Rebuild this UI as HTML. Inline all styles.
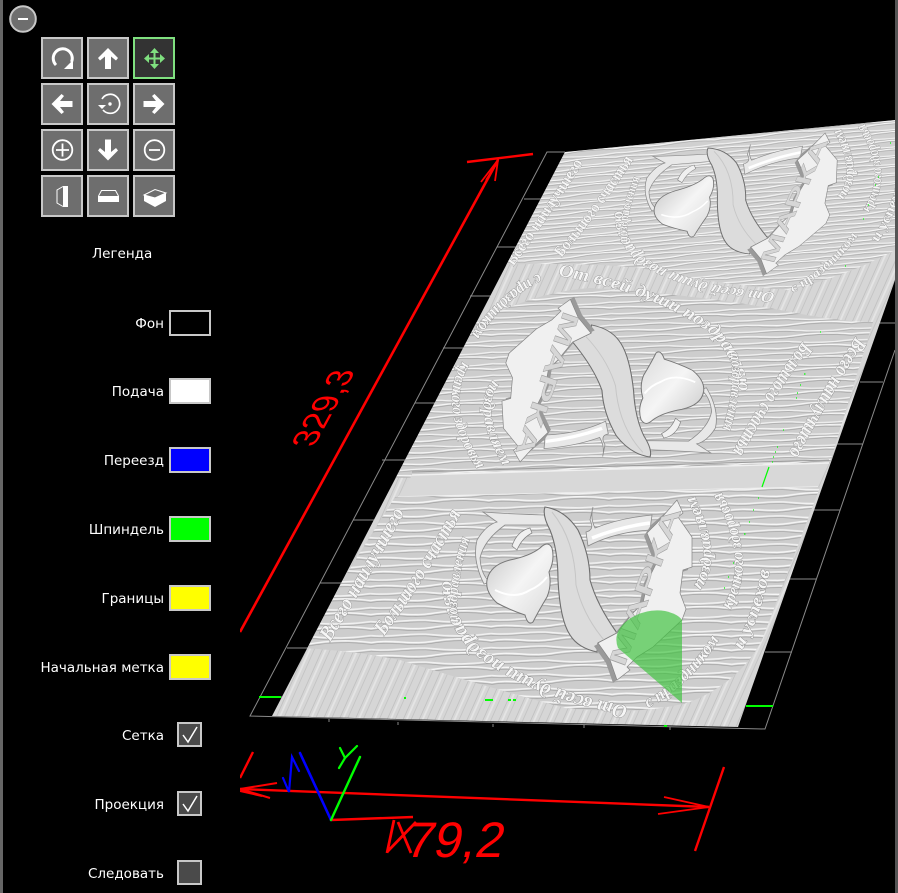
<!DOCTYPE html>
<html lang="ru"><head><meta charset="utf-8"><title>Легенда</title>
<style>
html,body{margin:0;padding:0;background:#000}
body{width:898px;height:893px;position:relative;overflow:hidden;font-family:"DejaVu Sans","Liberation Sans",sans-serif;font-size:13.500px;color:#fff}
.bar{position:absolute;left:0;top:0;width:3px;height:893px;background:#666}
.bar2{position:absolute;left:895px;top:0;width:3px;height:893px;background:#555}
.btn{position:absolute;width:38px;height:38px;border:2px solid #c8c8c8;background:#6e6e6e}
.sw{position:absolute;left:169px;width:38px;height:22px;border:2px solid #c8c8c8}
.lb{position:absolute;right:734px;white-space:nowrap;line-height:16px}
.cb{position:absolute;left:177px;width:21px;height:21px;border:2px solid #c8c8c8;background:#4a4a4a}
svg{position:absolute;left:0;top:0}
</style></head><body>
<svg width="898" height="893" viewBox="0 0 898 893">
<defs>
<pattern id="w1" width="120" height="14" patternUnits="userSpaceOnUse" patternTransform="translate(0,2) rotate(-1)">
<rect width="120" height="14" fill="#cdcdcd"/>
<path d="M0,3C20,0 40,6 60,3S100,0 120,3" fill="none" stroke="#f6f6f6" stroke-width="1.600"/>
<path d="M0,4.800C20,1.800 40,7.800 60,4.800S100,1.800 120,4.800" fill="none" stroke="#9a9a9a" stroke-width=".7"/>
<path d="M0,10C20,12.500 40,7.500 60,10S100,12.500 120,10" fill="none" stroke="#f2f2f2" stroke-width="1.500"/>
<path d="M0,11.700C20,14.200 40,9.200 60,11.700S100,14.200 120,11.700" fill="none" stroke="#a0a0a0" stroke-width=".7"/>
</pattern>
<pattern id="w2" width="120" height="14" patternUnits="userSpaceOnUse" patternTransform="translate(0,5) rotate(-2) scale(1,.82)">
<rect width="120" height="14" fill="#cdcdcd"/>
<path d="M0,3C20,0 40,6 60,3S100,0 120,3" fill="none" stroke="#f6f6f6" stroke-width="1.600"/>
<path d="M0,4.800C20,1.800 40,7.800 60,4.800S100,1.800 120,4.800" fill="none" stroke="#9a9a9a" stroke-width=".7"/>
<path d="M0,10C20,12.500 40,7.500 60,10S100,12.500 120,10" fill="none" stroke="#f2f2f2" stroke-width="1.500"/>
<path d="M0,11.700C20,14.200 40,9.200 60,11.700S100,14.200 120,11.700" fill="none" stroke="#a0a0a0" stroke-width=".7"/>
</pattern>
<pattern id="w3" width="100" height="14" patternUnits="userSpaceOnUse" patternTransform="rotate(-5) scale(1,.62)">
<rect width="100" height="14" fill="#d0d0d0"/>
<path d="M0,3C17,0 33,6 50,3S83,0 100,3" fill="none" stroke="#f8f8f8" stroke-width="1.700"/>
<path d="M0,5C17,2 33,8 50,5S83,2 100,5" fill="none" stroke="#a0a0a0" stroke-width=".8"/>
<path d="M0,10C17,12.500 33,7.500 50,10S83,12.500 100,10" fill="none" stroke="#f4f4f4" stroke-width="1.600"/>
<path d="M0,12C17,14.500 33,9.500 50,12S83,14.500 100,12" fill="none" stroke="#a4a4a4" stroke-width=".8"/>
</pattern>
<pattern id="st" width="16" height="40" patternUnits="userSpaceOnUse" patternTransform="skewX(-24)">
<rect width="16" height="40" fill="#d6d6d6"/>
<rect x="3" width="1" height="40" fill="#c2c2c2"/><rect x="6" width="2" height="40" fill="#e4e4e4"/><rect x="11" width="1" height="40" fill="#c4c4c4"/>
</pattern>
<clipPath id="surf"><polygon points="272,716 565,152 895,120 895,280 738,727"/></clipPath>
<clipPath id="cv"><rect x="240" y="0" width="655" height="893"/></clipPath>
<linearGradient id="fish" x1="0" y1="0" x2="1" y2="1"><stop offset="0" stop-color="#c4c4c4"/><stop offset=".5" stop-color="#f5f5f5"/><stop offset="1" stop-color="#d8d8d8"/></linearGradient>
<path id="t1" d="M628,706Q530,688 478,645Q448,612 452,570"/>
<path id="t2" d="M330,642Q368,580 408,506"/>
<path id="t3" d="M384,636Q425,580 462,512"/>
<path id="t5" d="M458,622Q454,585 470,538"/>
<path id="t6" d="M648,708Q700,680 730,620"/>
<path id="t8" d="M730,610Q760,560 720,490"/>
<path id="t9" d="M700,590Q725,560 695,497"/>
<path id="t10" d="M742,650Q760,620 770,570"/>
<g id="logo">
<path d="M483,512Q510,514 545,515L552,525L505,525Q484,540 480,558Q481,575 490,582L484,584Q472,560 477,540Q486,525 497,522Z" fill="#e8e8e8" stroke="#8a8a8a" stroke-width=".8"/>
<path d="M530,528Q517,531 512,546L517,550Q522,538 532,533Z" fill="#f0f0f0" stroke="#808080" stroke-width=".7"/>
<path d="M487,580Q490,565 510,560Q530,556 540,548Q548,540 552,548Q555,560 549,572Q552,585 547,597Q538,612 533,622Q528,626 525,615Q510,610 497,603Q485,592 487,580Z" fill="url(#fish)" stroke="#777" stroke-width="1"/>
<path d="M495,590Q515,600 530,590Q540,586 547,577" fill="none" stroke="#fff" stroke-width="2"/>
<path d="M593,507Q590,518 595,528Q620,518 652,515L650,530Q615,532 588,546L586,532Q595,530 590,520Z" fill="#e8e8e8" stroke="#8a8a8a" stroke-width=".8"/>
<path d="M592,538Q620,527 650,523" stroke="#fff" stroke-width="3.500" fill="none"/>
<path d="M545,507Q565,510 578,530Q590,555 590,580Q597,605 617,633L598,643L597,652Q578,648 570,635Q560,620 558,580Q558,550 550,530Q542,515 545,507Z" fill="#dcdcdc" stroke="#6e6e6e" stroke-width="1.100"/>
<path d="M552,512Q575,540 576,585Q583,615 604,640" fill="none" stroke="#c6c6c6" stroke-width="1"/>
<path d="M673,506L651,525L644,536L654,562L644,583L639,606L629,616L613,636L594,646L606,663L613,683L626,673L623,670L633,660L649,650L678,623L682,612L676,596L679,573L688,570L688,540L674,520L679,516Z" fill="#9a9a9a"/>
<path d="M677,500L657,523L647,533L658,560L648,580L643,603L633,613L617,633L598,643L610,660L617,680L630,670L627,667L637,657L653,647L682,620L686,609L680,593L683,570L692,567L692,537L678,517L683,513Z" fill="#f0f0f0" stroke="#858585" stroke-width=".7"/>
<text transform="translate(624,668) rotate(-70)" font-family="Liberation Sans" font-weight="bold" font-size="24" fill="#d6d6d6" stroke="#a0a0a0" stroke-width=".4" textLength="168" lengthAdjust="spacingAndGlyphs">МАРКА</text>
<g font-family="Liberation Serif" font-weight="bold" font-style="italic" fill="#f6f6f6" stroke="#7c7c7c" stroke-width=".7" paint-order="stroke">
<text font-size="20"><textPath href="#t1" textLength="235" lengthAdjust="spacingAndGlyphs">От всей души поздравляю</textPath></text>
<text font-size="21"><textPath href="#t2" textLength="150" lengthAdjust="spacingAndGlyphs">Всего наилучшего</textPath></text>
<text font-size="21"><textPath href="#t3" textLength="145" lengthAdjust="spacingAndGlyphs">Большого счастья</textPath></text>
<text font-size="16"><textPath href="#t5" textLength="85" lengthAdjust="spacingAndGlyphs">поздравления</textPath></text>
<text font-size="17"><textPath href="#t6" textLength="100" lengthAdjust="spacingAndGlyphs">с праздником</textPath></text>
<text font-size="17"><textPath href="#t8" textLength="125" lengthAdjust="spacingAndGlyphs">крепкого здоровья</textPath></text>
<text font-size="17"><textPath href="#t9" textLength="100" lengthAdjust="spacingAndGlyphs">поздравляем</textPath></text>
<text font-size="18"><textPath href="#t10" textLength="85" lengthAdjust="spacingAndGlyphs">и успехов</textPath></text>
</g>
</g>
</defs>

<g clip-path="url(#cv)">
<g fill="none" stroke="#8a8a8a" stroke-width="1">
<path d="M565,152H547L250,716L720,728L765,729L895,350"/>
<path d="M524,199H545M497,247H520M470,296H495M443,348H470M415,403H440M382,460H410M353,520H380M320,583H345M287,648H310M262,697H282"/>
<path d="M880,323H895M860,382H883M837,444H863M814,510H840M789,579H816M765,652H792"/>
<path d="M329,719v3M398,722v3M493,724v3M584,725v3M670,727v3"/>
</g>

<g clip-path="url(#surf)">
<rect x="240" y="110" width="658" height="620" fill="url(#st)"/>
<path d="M565,152L895,120V250Q850,275 790,290Q720,285 640,268Q580,262 500,265Z" fill="url(#w3)"/>
<path d="M462,330Q530,292 590,288Q700,295 780,310Q840,322 873,322L830,462L395,478Z" fill="url(#w2)"/>
<path d="M412,475L829,463L818,487L398,497Z" fill="#d8d8d8"/>
<path d="M412,475L829,463M398,497L818,487" fill="none" stroke="#f0f0f0" stroke-width="1.500"/>
<path d="M412,472L829,460" fill="none" stroke="#9a9a9a" stroke-width="1"/>
<path d="M395,497L820,487L762,640Q740,682 690,702Q640,716 565,708Q480,685 400,660Q350,650 300,648Z" fill="url(#w1)"/>
<use href="#logo"/>
<use href="#logo" transform="matrix(-.987,-.0102,-.05,-.907,1213.3,922.4)"/>
<use href="#logo" transform="matrix(.885,-.0735,-.03,.757,240.9,-195.7)"/>
</g>

<g stroke="#00ff00" fill="none">
<path d="M259,697H281M404,698h2M485,700h8M508,700h3M513,700h3M746,706H773M664,726h3" stroke-width="2"/>
<path d="M762,487L769,467" stroke-width="1.200"/>
<path d="M758,498h1M753,510h1M749,522h1M744,534h1.500M820,332h1M804,374h1.500M800,385h1M797,393h1M796,398h1M783,430h1M777,447h1M775,452h1M773,457h1M772,462h1M733,563h1M728,577h1M724,588h1M890,143h1M878,177h1M875,185h1M868,205h1M863,219h1M845,266h1" stroke-width="1.200"/>
</g>

<path d="M682,703L618,648Q612,632 628,620Q645,608 665,611Q678,614 682,620Z" fill="#3ec23e" fill-opacity=".68"/>

<g stroke="#ff0000" fill="none">
<path d="M240,632L498,160" stroke-width="2.600"/>
<path d="M467,162L533,154" stroke-width="2.400"/>
<path d="M481,182L498,160L495,181M486,180L497,163" stroke-width="1.800"/>
<path d="M240,789L709,807" stroke-width="2.400"/>
<path d="M724,767L695,851" stroke-width="2.400"/>
<path d="M664,797L709,807L658,814" stroke-width="1.800"/>
<path d="M277,783L240,789L270,798M240,791L262,796" stroke-width="2"/>
<path d="M253,752L240,778" stroke-width="2.400"/>
<path d="M331,820L413,817" stroke-width="2.400"/>
<path d="M416,822L387,852M398,822L411,853M394,820L387,853" stroke-width="2.800"/>
</g>
<text transform="translate(404,857) skewX(-12)" font-family="Liberation Sans" font-size="50" fill="#ff0000">79,2</text>
<text transform="matrix(.42,-.77,.87,.035,314,447)" font-family="Liberation Sans" font-size="40" fill="#ff0000">329,3</text>

<g fill="none" stroke-linecap="round">
<path d="M331,820L300,753" stroke="#0000ff" stroke-width="2.600"/>
<path d="M283,778L289,792L292,757L299,771" stroke="#0000ff" stroke-width="2.200"/>
<path d="M331,820L360,757" stroke="#00ff00" stroke-width="2.400"/>
<path d="M340,748L345,758L357,746M345,758L339,768" stroke="#00ff00" stroke-width="2.200"/>
</g>
</g>
</svg>

<div class="bar"></div>
<div class="bar2"></div>
<svg width="40" height="40" style="left:8px;top:4px"><circle cx="15" cy="15" r="12.800" fill="#6e6e6e" stroke="#c8c8c8" stroke-width="2"/><path d="M10,15H20" stroke="#fff" stroke-width="2"/></svg>

<div class="btn" style="left:41px;top:37px"></div>
<div class="btn" style="left:87px;top:37px"></div>
<div class="btn" style="left:133px;top:37px;background:#333;border-color:#7fe07f"></div>
<div class="btn" style="left:41px;top:83px"></div>
<div class="btn" style="left:87px;top:83px"></div>
<div class="btn" style="left:133px;top:83px"></div>
<div class="btn" style="left:41px;top:129px"></div>
<div class="btn" style="left:87px;top:129px"></div>
<div class="btn" style="left:133px;top:129px"></div>
<div class="btn" style="left:41px;top:175px"></div>
<div class="btn" style="left:87px;top:175px"></div>
<div class="btn" style="left:133px;top:175px"></div>

<svg width="220" height="225" viewBox="0 0 220 225">
<defs><polygon id="ar" points="0,-10.500 10,-.5 8,2 3,-2 3,10.500 -3,10.500 -3,-2 -8,2 -10,-.5"/></defs>
<path d="M56,65A9.500,9.500 0 1 1 71.500,62" fill="none" stroke="#fff" stroke-width="3"/>
<polygon points="73,60 73,69 64,69" fill="#fff"/>
<use href="#ar" x="108" y="58.500" fill="#fff"/>
<g fill="#7fe07f"><path d="M146,58.500H163M154.500,50V67" stroke="#7fe07f" stroke-width="2"/>
<polygon points="154.500,48 159,53 150,53"/><polygon points="154.500,69 159,64 150,64"/><polygon points="144,58.500 149,54 149,63"/><polygon points="165,58.500 160,54 160,63"/></g>
<use href="#ar" transform="translate(62,104) rotate(-90)" fill="#fff"/>
<path d="M102,99A9.500,9.500 0 1 1 103,110" fill="none" stroke="#fff" stroke-width="1.700"/>
<polygon points="98,105 106,105 102,109" fill="#fff"/><circle cx="110" cy="104" r="1.700" fill="#fff"/>
<use href="#ar" transform="translate(154,104) rotate(90)" fill="#fff"/>
<circle cx="62.500" cy="150" r="9.800" fill="none" stroke="#fff" stroke-width="1.800"/><path d="M56,150H69M62.500,143.500V156.500" stroke="#fff" stroke-width="1.800"/>
<use href="#ar" transform="translate(108,150) rotate(180)" fill="#fff"/>
<circle cx="154.500" cy="150" r="9.800" fill="none" stroke="#fff" stroke-width="1.800"/><path d="M149,150H160" stroke="#fff" stroke-width="1.800"/>
<path d="M63,186H68V207H63Z" fill="#fff"/><path d="M63,186.500L57,190V203L63,206.500" fill="none" stroke="#fff" stroke-width="1"/>
<path d="M98,196H119V202H98Z" fill="#fff"/><path d="M98.500,196L101.500,190.500H115.500L118.500,196" fill="none" stroke="#fff" stroke-width="1"/>
<path d="M144,195V201L155,207L166,201V193L155,198Z" fill="#fff"/><path d="M144,195L155,189.500L166,193L155,198Z" fill="none" stroke="#fff" stroke-width="1"/>
</svg>

<div style="position:absolute;left:92px;top:246px;line-height:16px">Легенда</div>
<div class="lb" style="top:316px">Фон</div><div class="sw" style="top:310px"></div>
<div class="lb" style="top:384px">Подача</div><div class="sw" style="top:378px;background:#fff"></div>
<div class="lb" style="top:453px">Переезд</div><div class="sw" style="top:447px;background:#0000ff"></div>
<div class="lb" style="top:522px">Шпиндель</div><div class="sw" style="top:516px;background:#00ff00"></div>
<div class="lb" style="top:591px">Границы</div><div class="sw" style="top:585px;background:#ffff00"></div>
<div class="lb" style="top:660px">Начальная метка</div><div class="sw" style="top:654px;background:#ffff00"></div>

<div class="lb" style="top:728px">Сетка</div>
<div class="cb" style="top:722px"><svg width="21" height="21"><path d="M4,11L9,18L18,3" fill="none" stroke="#fff" stroke-width="1.500"/></svg></div>
<div class="lb" style="top:797px">Проекция</div>
<div class="cb" style="top:791px"><svg width="21" height="21"><path d="M4,11L9,18L18,3" fill="none" stroke="#fff" stroke-width="1.500"/></svg></div>
<div class="lb" style="top:866px">Следовать</div>
<div class="cb" style="top:860px"></div>
</body></html>
